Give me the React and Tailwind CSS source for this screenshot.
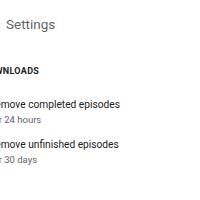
export default function App() {
  const items = [
    { title: "Remove completed episodes", sub: "After 24 hours" },
    { title: "Remove unfinished episodes", sub: "After 30 days" },
  ];

  return (
    <div className="w-[200px] h-[200px] bg-white overflow-hidden font-['Roboto',sans-serif]">
      <div className="h-[46px] flex items-center pl-[6px] pt-[4px]">
        <span className="text-[13.5px] text-[#5f6368] leading-none">Settings</span>
      </div>
      <div className="-ml-[18px] mt-[21px] text-[9px] font-bold tracking-[0.3px] text-[#202124] leading-none">
        DOWNLOADS
      </div>
      <div className="mt-[22px] -ml-[11px] flex flex-col gap-[12px]">
        {items.map((it) => (
          <div key={it.title} className="flex flex-col">
            <span className="text-[10.2px] leading-[14px] text-[#202124] whitespace-nowrap">{it.title}</span>
            <span className="text-[9.5px] leading-[12px] mt-[2px] text-[#5f6368] whitespace-nowrap -ml-[8px]">{it.sub}</span>
          </div>
        ))}
      </div>
    </div>
  );
}
